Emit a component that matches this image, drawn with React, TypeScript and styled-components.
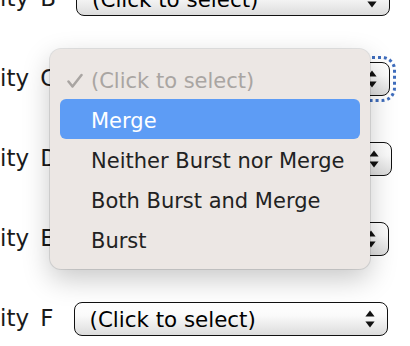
import React from "react";
import styled, { createGlobalStyle } from "styled-components";

const GlobalStyle = createGlobalStyle`
  html, body {
    margin: 0;
    padding: 0;
    background: #ffffff;
    overflow: hidden;
  }
  body {
    font-family: "DejaVu Sans", "Liberation Sans", sans-serif;
  }
`;

const Page = styled.div`
  position: relative;
  width: 410px;
  height: 346px;
  overflow: hidden;
  background: #ffffff;
`;

const List = styled.div`
  display: flex;
  flex-direction: column;
  gap: 46px;
  margin-top: -18px;
  margin-left: -57px;
`;

const Row = styled.div`
  display: flex;
  align-items: center;
  height: 34px;
`;

const Label = styled.span`
  font-size: 23px;
  line-height: 28px;
  color: #1a1a1a;
  white-space: nowrap;
  word-spacing: 4px;
  padding-bottom: 3px;
`;

const SelectBox = styled.div<{ $focused?: boolean }>`
  box-sizing: border-box;
  margin-left: 20px;
  width: 314px;
  height: 34px;
  display: flex;
  align-items: center;
  justify-content: space-between;
  padding: 0 12px 0 15px;
  border: 1.5px solid #111;
  border-radius: 8px;
  background: linear-gradient(to bottom, #ffffff 0%, #fafafa 40%, #dcdcdc 100%);
  font-size: 21.4px;
  color: #000;
  outline: ${(p) => (p.$focused ? "3px dotted #3f6dbd" : "none")};
  outline-offset: 3px;
`;

const SelectText = styled.span`
  white-space: nowrap;
`;

const Arrows = styled.svg`
  width: 10px;
  height: 18px;
  flex: none;
`;

const Menu = styled.div`
  position: absolute;
  left: 50px;
  top: 49px;
  box-sizing: border-box;
  width: 320px;
  padding: 10px;
  background: #ece7e4;
  border-radius: 11px;
  box-shadow: 0 0 0 1px rgba(0, 0, 0, 0.1), 0 10px 28px rgba(0, 0, 0, 0.22);
  display: flex;
  flex-direction: column;
`;

const Item = styled.div<{ $active?: boolean; $muted?: boolean }>`
  box-sizing: border-box;
  height: 40px;
  padding-top: 3px;
  display: grid;
  grid-template-columns: 31px 1fr;
  align-items: center;
  border-radius: 6px;
  font-size: 21px;
  white-space: nowrap;
  background: ${(p) => (p.$active ? "#5d9cf5" : "transparent")};
  color: ${(p) => (p.$active ? "#ffffff" : p.$muted ? "#a9a5a2" : "#222222")};
`;

const Check = styled.svg`
  width: 16px;
  height: 16px;
  margin-left: 7px;
`;

const UpDown = () => (
  <Arrows viewBox="0 0 10 18">
    <path d="M5 0.5 L9.6 6.5 L0.4 6.5 Z" fill="#111" />
    <path d="M5 17.5 L9.6 11.5 L0.4 11.5 Z" fill="#111" />
  </Arrows>
);

const rows = ["B", "C", "D", "E", "F"];

export default function App() {
  return (
    <Page>
      <GlobalStyle />
      <List>
        {rows.map((r) => (
          <Row key={r}>
            <Label>Activity {r}</Label>
            <SelectBox $focused={r === "C"}>
              <SelectText>(Click to select)</SelectText>
              <UpDown />
            </SelectBox>
          </Row>
        ))}
      </List>
      <Menu>
        <Item $muted>
          <Check viewBox="0 0 16 16">
            <path
              d="M1.5 8.5 L5.5 13.5 L14.5 2"
              fill="none"
              stroke="#a9a5a2"
              strokeWidth="2.5"
              strokeLinecap="round"
              strokeLinejoin="round"
            />
          </Check>
          <span>(Click to select)</span>
        </Item>
        <Item $active>
          <span />
          <span>Merge</span>
        </Item>
        <Item>
          <span />
          <span>Neither Burst nor Merge</span>
        </Item>
        <Item>
          <span />
          <span>Both Burst and Merge</span>
        </Item>
        <Item>
          <span />
          <span>Burst</span>
        </Item>
      </Menu>
    </Page>
  );
}
